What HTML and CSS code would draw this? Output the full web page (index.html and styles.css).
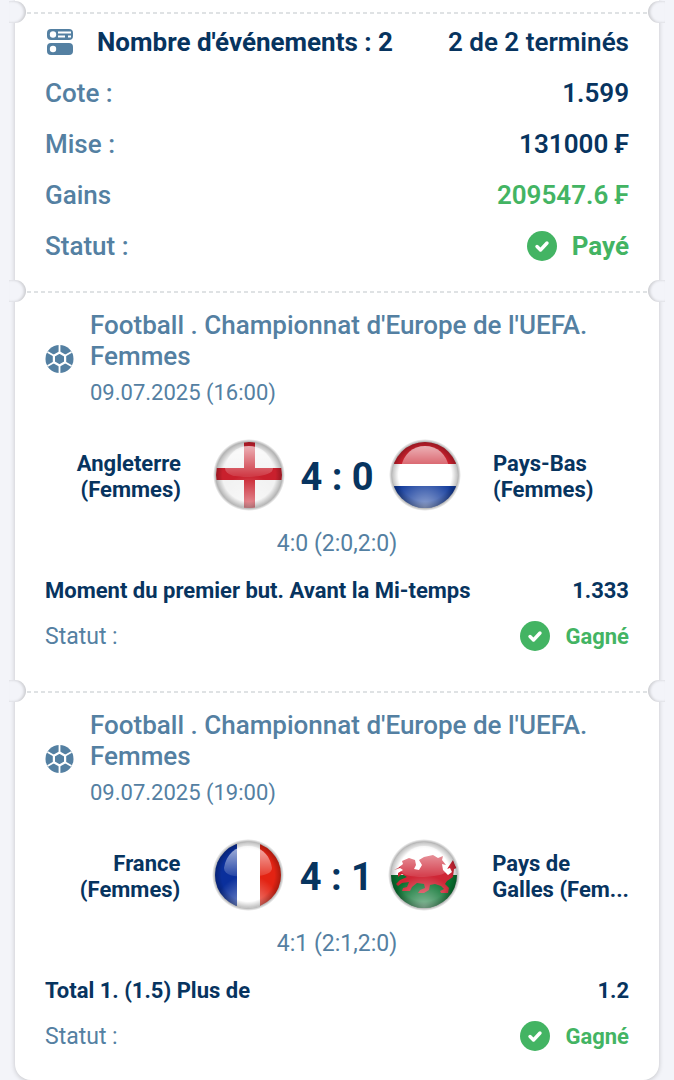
FILE: index.html
```
<!DOCTYPE html>
<html lang="fr">
<head>
    <meta charset="UTF-8">
    <meta name="viewport" content="width=device-width, initial-scale=1.0">
    <title>Coupon</title>
    <link rel="stylesheet" href="styles.css">
</head>
<body>
    <svg class="defs" aria-hidden="true">
        <defs>
            <clipPath id="disc"><circle cx="36" cy="36" r="33"/></clipPath>
            <linearGradient id="gloss" x1="0" y1="0" x2="0" y2="1">
                <stop offset="0" stop-color="#fff" stop-opacity=".65"/>
                <stop offset="1" stop-color="#fff" stop-opacity=".1"/>
            </linearGradient>
            <radialGradient id="glow" cx=".5" cy="1" r=".5">
                <stop offset="0" stop-color="#fff" stop-opacity=".55"/>
                <stop offset="1" stop-color="#fff" stop-opacity="0"/>
            </radialGradient>
            <radialGradient id="shade" cx=".5" cy=".5" r=".5">
                <stop offset=".8" stop-color="#000" stop-opacity="0"/>
                <stop offset="1" stop-color="#000" stop-opacity=".25"/>
            </radialGradient>
            <radialGradient id="halo" cx=".5" cy=".5" r=".5">
                <stop offset=".88" stop-color="#000" stop-opacity=".45"/>
                <stop offset="1" stop-color="#000" stop-opacity="0"/>
            </radialGradient>
            <symbol id="shadow" viewBox="0 0 72 72">
                <circle cx="36" cy="36" r="36" fill="url(#halo)"/>
            </symbol>
            <symbol id="shine" viewBox="0 0 72 72">
                <circle cx="36" cy="36" r="33" fill="url(#glow)"/>
                <circle cx="36" cy="36" r="33" fill="url(#shade)"/>
                <path d="M12 29C14 15 24 7 36 7s22 8 24 22c0 6-9 8-24 9-14 0-24-2-24-9z" fill="url(#gloss)"/>
            </symbol>
            <symbol id="check" viewBox="0 0 30 30">
                <circle cx="15" cy="15" r="15" fill="#43b463"/>
                <path d="M10 15.500l3.500 3.500 6.500-7" fill="none" stroke="#fff" stroke-width="3.400" stroke-linecap="round" stroke-linejoin="round"/>
            </symbol>
            <symbol id="ball" viewBox="0 0 28 28">
                <circle cx="14" cy="14" r="14" fill="#5480a2"/>
                <path d="M14 0v8M14 20v8M2 7l7 4M19 17l7 4M2 21l7-4M19 11l7-4" stroke="#fff" stroke-width="1.800"/>
                <path d="M14 7.500l5.600 3.200v6.600L14 20.500l-5.600-3.200v-6.600z" fill="#5480a2" stroke="#fff" stroke-width="2.200"/>
            </symbol>
        </defs>
    </svg>

    <main class="coupon">
        <section class="part summary">
            <div class="row row-head">
                <svg class="list-icon" viewBox="0 0 26 26" aria-hidden="true">
                    <rect width="26" height="11" rx="4" fill="#5480a2"/>
                    <circle cx="6" cy="5.500" r="3.200" fill="#fff"/>
                    <path d="M11 3.500h13M11 7.500h7M21 7.500h3" stroke="#fff" stroke-width="1.800"/>
                    <rect y="14" width="26" height="12" rx="4" fill="#5480a2"/>
                    <circle cx="6" cy="20" r="3.200" fill="#fff"/>
                </svg>
                <h1>Nombre d'événements : 2</h1>
                <strong>2 de 2 terminés</strong>
            </div>
            <div class="row"><span>Cote :</span><strong>1.599</strong></div>
            <div class="row"><span>Mise :</span><strong>131000 ₣</strong></div>
            <div class="row"><span>Gains</span><strong class="green">209547.6 ₣</strong></div>
            <div class="row"><span>Statut :</span><strong class="green status"><svg class="check" aria-hidden="true"><use href="#check"/></svg>Payé</strong></div>
        </section>

        <section class="part match">
            <header class="match-head">
                <svg class="ball" aria-hidden="true"><use href="#ball"/></svg>
                <div>
                    <h2>Football . Championnat d'Europe de l'UEFA. Femmes</h2>
                    <time datetime="2025-07-09T16:00">09.07.2025 (16:00)</time>
                </div>
            </header>
            <div class="teams">
                <p class="team home">Angleterre<br>(Femmes)</p>
                <div class="score">
                    <svg class="flag" viewBox="0 0 72 72" role="img" aria-label="Angleterre">
                        <use href="#shadow"/>
                        <g clip-path="url(#disc)">
                            <path d="M0 0h72v72H0z" fill="#f2f2f2"/>
                            <path d="M31 0h11v72H31zM0 29h72v12H0z" fill="#c9202d"/>
                        </g>
                        <use href="#shine"/>
                    </svg>
                    <b>4 : 0</b>
                    <svg class="flag" viewBox="0 0 72 72" role="img" aria-label="Pays-Bas">
                        <use href="#shadow"/>
                        <g clip-path="url(#disc)">
                            <path d="M0 0h72v25H0z" fill="#c9202d"/>
                            <path d="M0 25h72v22H0z" fill="#fff"/>
                            <path d="M0 47h72v25H0z" fill="#123b9c"/>
                        </g>
                        <use href="#shine"/>
                    </svg>
                </div>
                <p class="team">Pays-Bas<br>(Femmes)</p>
            </div>
            <p class="periods">4:0 (2:0,2:0)</p>
            <div class="bet"><strong>Moment du premier but. Avant la Mi-temps</strong><strong>1.333</strong></div>
            <div class="bet"><span>Statut :</span><strong class="green status"><svg class="check" aria-hidden="true"><use href="#check"/></svg>Gagné</strong></div>
        </section>

        <section class="part match">
            <header class="match-head">
                <svg class="ball" aria-hidden="true"><use href="#ball"/></svg>
                <div>
                    <h2>Football . Championnat d'Europe de l'UEFA. Femmes</h2>
                    <time datetime="2025-07-09T19:00">09.07.2025 (19:00)</time>
                </div>
            </header>
            <div class="teams">
                <p class="team home">France<br>(Femmes)</p>
                <div class="score">
                    <svg class="flag" viewBox="0 0 72 72" role="img" aria-label="France">
                        <use href="#shadow"/>
                        <g clip-path="url(#disc)">
                            <path d="M0 0h25v72H0z" fill="#0a2f9c"/>
                            <path d="M25 0h23v72H25z" fill="#fff"/>
                            <path d="M48 0h24v72H48z" fill="#e32313"/>
                        </g>
                        <use href="#shine"/>
                    </svg>
                    <b>4 : 1</b>
                    <svg class="flag" viewBox="0 0 72 72" role="img" aria-label="Pays de Galles">
                        <use href="#shadow"/>
                        <g clip-path="url(#disc)">
                            <path d="M0 0h72v36H0z" fill="#fff"/>
                            <path d="M0 36h72v36H0z" fill="#08722f"/>
                            <path d="M10 29l5-4-1-3 7-3 6 2 1 5-2 4 5 1 3-5-3-5 5-3 9-2 5 3 5-2-1 4 4 5-4-1 1 6 5 5 4-3-2-4-3 1 4-6 2-3 2 5 2 3-3 1-1 8-6 4-2 3 4 4-1 5h-7l-1-2 4-2-3-3-6-2-5 1-1 5-5 3h-6l2-3 5-2-1-4-7-1-5 4-2 4h-8l1-3 4-1 2-5-7 1-4 3-2-2 4-4 7-3-5-3-4 3v-4l5-3-3-2-6 2z" fill="#cf2636"/>
                        </g>
                        <use href="#shine"/>
                    </svg>
                </div>
                <p class="team">Pays de<br>Galles (Fem...</p>
            </div>
            <p class="periods">4:1 (2:1,2:0)</p>
            <div class="bet"><strong>Total 1. (1.5) Plus de</strong><strong>1.2</strong></div>
            <div class="bet"><span>Statut :</span><strong class="green status"><svg class="check" aria-hidden="true"><use href="#check"/></svg>Gagné</strong></div>
        </section>
    </main>
</body>
</html>
```
FILE: styles.css
```
* {
    box-sizing: border-box;
}

body {
    font-family: Roboto, "Liberation Sans", sans-serif;
    font-size: 26px;
    background-color: #f3f4f9;
    color: #5480a2;
    margin: 0;
    overflow-x: hidden;
}

h1, h2, p {
    margin: 0;
    font-size: inherit;
}

strong, b {
    font-weight: 600;
    color: #07345f;
}

.defs {
    position: absolute;
    width: 0;
    height: 0;
}

.coupon {
    margin: 0 15px;
    padding-top: 12px;
    background-color: #ffffff;
    border-radius: 0 0 16px 16px;
    box-shadow: 0 1px 5px rgba(0, 0, 0, 0.2);
}

/* dashed tear line with a notch at each end */
.part {
    position: relative;
    padding: 0 30px;
    background: repeating-linear-gradient(to right, #dfe2e4 0, #dfe2e4 4px, transparent 4px, transparent 7px) 12px 0 / calc(100% - 24px) 2px no-repeat;
}

.part::before,
.part::after {
    content: "";
    position: absolute;
    top: -11px;
    width: 17px;
    height: 22px;
    background-color: #f3f4f9;
}

.part::before {
    left: -6px;
    border-radius: 0 11px 11px 0;
    box-shadow: inset -2px 0 3px rgba(0, 0, 0, 0.16);
}

.part::after {
    right: -6px;
    border-radius: 11px 0 0 11px;
    box-shadow: inset 2px 0 3px rgba(0, 0, 0, 0.16);
}

.summary {
    padding-top: 4px;
    padding-bottom: 20px;
}

.row, .bet {
    display: flex;
    align-items: center;
    justify-content: space-between;
}

.row {
    height: 51px;
    font-weight: 500;
}

.row-head h1 {
    margin-left: 24px;
    margin-right: auto;
    font-weight: 700;
    color: #07345f;
}

.list-icon {
    width: 26px;
    height: 26px;
    margin-left: 2px;
}

.green {
    color: #43b463;
}

.status {
    display: flex;
    align-items: center;
    gap: 15px;
    font-weight: 700;
}

.check {
    width: 30px;
    height: 30px;
}

.match {
    padding-top: 19px;
    padding-bottom: 32px;
}

.match:last-child {
    padding-bottom: 21px;
}

.match-head {
    display: flex;
    align-items: center;
    gap: 16px;
}

.ball {
    flex: none;
    width: 29px;
    height: 28px;
}

.match-head h2 {
    font-weight: 500;
    line-height: 31px;
}

.match-head time {
    display: block;
    margin-top: 6px;
    font-size: 22px;
    line-height: 30px;
}

.teams {
    display: grid;
    grid-template-columns: 1fr 248px 1fr;
    gap: 32px;
    align-items: center;
    margin-top: 31px;
}

.team {
    padding-top: 4px;
    font-size: 22px;
    line-height: 26px;
    font-weight: 700;
    color: #07345f;
    white-space: nowrap;
}

.home {
    text-align: right;
}

.score {
    display: flex;
    align-items: center;
    justify-content: space-between;
}

.score b {
    padding-top: 4px;
    font-size: 38px;
    font-weight: 700;
}

.flag {
    width: 72px;
    height: 72px;
}

.periods {
    margin: 18px 0 8px;
    font-size: 23px;
    line-height: 30px;
    text-align: center;
}

.bet {
    height: 46px;
    font-size: 22px;
}

.bet strong {
    font-weight: 700;
}

.bet span {
    font-size: 23px;
}
```
